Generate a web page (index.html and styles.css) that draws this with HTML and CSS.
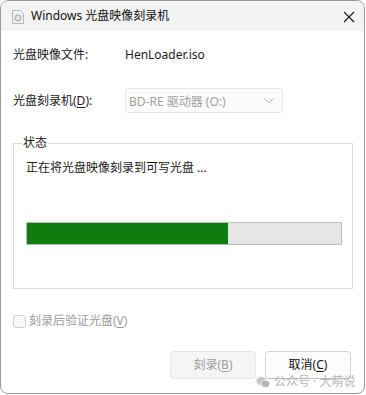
FILE: index.html
```html
<!DOCTYPE html>
<html lang="zh-CN">
<head>
<meta charset="utf-8">
<link rel="stylesheet" href="styles.css">
</head>
<body>
<div class="window">
  <div class="titlebar">
    <svg class="app-icon" width="12" height="14" viewBox="0 0 12 14">
      <path d="M0.5 0.5 H8 L11.5 4 V13.5 H0.5 Z" fill="#f4f4f4" stroke="#b5b5b5"/>
      <circle cx="6" cy="8" r="3.2" fill="#d8d8d8" stroke="#9a9a9a" stroke-width="0.8"/>
      <circle cx="6" cy="8" r="0.9" fill="#fff"/>
    </svg>
    <span class="title">Windows 光盘映像刻录机</span>
    <svg class="close" width="12" height="12" viewBox="0 0 12 12">
      <path d="M1 1 L11 11 M11 1 L1 11" stroke="#1a1a1a" stroke-width="1.1"/>
    </svg>
  </div>
  <div class="content">
    <div class="row file-row">
      <span class="label">光盘映像文件:</span>
      <span class="value">HenLoader.iso</span>
    </div>
    <div class="row drive-row">
      <span class="label">光盘刻录机(<u>D</u>):</span>
      <div class="select">
        <span>BD-RE 驱动器 (O:)</span>
        <svg width="10" height="6" viewBox="0 0 10 6"><path d="M0.5 0.5 L5 5 L9.5 0.5" fill="none" stroke="#b8b8b8" stroke-width="1"/></svg>
      </div>
    </div>
    <fieldset class="group">
      <legend>状态</legend>
      <div class="status">正在将光盘映像刻录到可写光盘 ...</div>
      <div class="progress"><div class="fill" style="width:64%"></div></div>
    </fieldset>
    <label class="check">
      <span class="box"></span>
      <span>刻录后验证光盘(<u>V</u>)</span>
    </label>
    <div class="buttons">
      <button class="btn disabled">刻录(<u>B</u>)</button>
      <button class="btn">取消(<u>C</u>)</button>
    </div>
  </div>
  <div class="watermark">
    <svg width="14" height="12" viewBox="0 0 14 12">
      <ellipse cx="5.5" cy="5" rx="5" ry="4.2" fill="#c4c4c4"/>
      <ellipse cx="9.5" cy="7.8" rx="4.2" ry="3.6" fill="#b0b0b0" stroke="#fff" stroke-width="0.8"/>
    </svg>
    <span>公众号 · 大萌说</span>
  </div>
</div>
</body>
</html>
```
FILE: styles.css
```css
* { box-sizing: border-box; }
html, body { margin: 0; padding: 0; background: #fff; }
body {
  font-family: "Noto Sans", "Noto Sans CJK SC", sans-serif;
  font-size: 12px;
  color: #1a1a1a;
}
.window {
  position: relative;
  width: 365px;
  height: 394px;
  border: 1px solid #9a9a9a;
  border-radius: 8px;
  overflow: hidden;
  background: #fff;
  display: flex;
  flex-direction: column;
}
.titlebar {
  height: 30px;
  flex: none;
  background: #f3f3f3;
  display: flex;
  align-items: center;
  padding-left: 11px;
  padding-right: 9px;
}
.app-icon { flex: none; margin-top: 1px; }
.title { margin-left: 7px; font-size: 12px; line-height: 16px; color: #111; }
.close { margin-left: auto; margin-right: 0; margin-top: 1px; }
.content {
  padding: 16px 12px 0 12px;
  display: flex;
  flex-direction: column;
}
.row { display: flex; align-items: center; }
.row .label { width: 112px; line-height: 16px; }
.file-row { height: 16px; }
.value { line-height: 16px; }
.drive-row { margin-top: 25px; }
.select {
  width: 158px;
  height: 25px;
  border: 1px solid #e6e6e6;
  border-radius: 3px;
  background: #fbfbfb;
  color: #a0a0a0;
  display: flex;
  align-items: center;
  justify-content: space-between;
  padding: 0 8px 0 3px;
}
u { text-decoration: underline; text-underline-offset: 2px; }
.group {
  margin: 22px 0 0 0;
  width: 340px;
  border: 1px solid #dadada;
  padding: 9px 12px 43px 12px;
  min-width: 0;
}
.group legend {
  padding: 0 1px;
  margin-left: -4px;
  line-height: 16px;
}
.status { line-height: 16px; }
.progress {
  margin-top: 46px;
  width: 316px;
  height: 23px;
  border: 1px solid #bcbcbc;
  background: #e6e6e6;
}
.fill { height: 100%; background: #107c10; }
.check {
  margin-top: 24px;
  display: flex;
  align-items: center;
  color: #9c9c9c;
  line-height: 16px;
}
.box {
  width: 13px;
  height: 13px;
  border: 1px solid #cfcfcf;
  border-radius: 3px;
  background: #f7f7f7;
  margin-right: 3px;
}
.buttons {
  margin-top: 22px;
  display: flex;
  justify-content: flex-end;
  gap: 9px;
  padding-right: 1px;
}
.btn {
  width: 86px;
  height: 28px;
  font: inherit;
  line-height: 14px;
  color: #111;
  background: #fdfdfd;
  border: 1px solid #d6d6d6;
  border-bottom-color: #bdbdbd;
  border-radius: 4px;
  padding: 0;
}
.btn.disabled {
  color: #9d9d9d;
  background: #f5f5f5;
  border-color: #e5e5e5;
}
.watermark {
  position: absolute;
  left: 255px;
  top: 374px;
  display: flex;
  align-items: center;
  gap: 4px;
  color: #b4b4b4;
  font-size: 12px;
  line-height: 13px;
  opacity: 0.95;
}
```
